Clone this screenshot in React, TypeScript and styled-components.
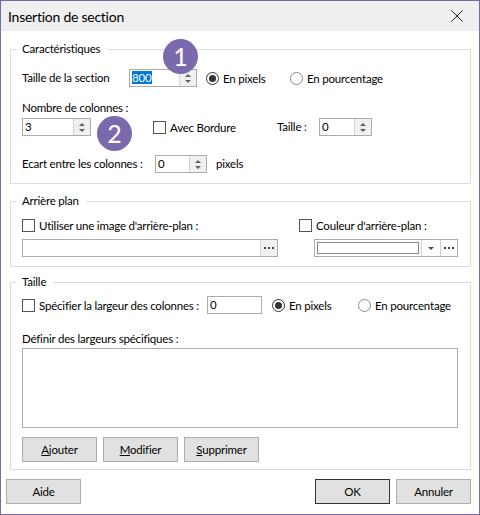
import React from "react";
import styled, { createGlobalStyle } from "styled-components";

const GlobalStyle = createGlobalStyle`
    html, body {
        margin: 0;
        padding: 0;
        background: #ffffff;
    }
`;

const Window = styled.div`
    width: 480px;
    height: 515px;
    box-sizing: border-box;
    border: 1px solid #7a68ad;
    background: #ffffff;
    position: relative;

    display: flex;
    flex-direction: column;

    color: #000000;
    font-family: "Segoe UI", Lato, sans-serif;
    font-size: 11.5px;
    letter-spacing: -0.2px;
`;

const TitleBar = styled.div`
    height: 30px;
    background: #efefef;
    padding-left: 7px;
    padding-right: 16px;

    display: flex;
    align-items: center;
    justify-content: space-between;

    span {
        font-size: 14px;
        letter-spacing: -0.25px;
    }
`;

const Body = styled.div`
    padding: 10px 8px 0 9px;

    display: flex;
    flex-direction: column;
`;

const Group = styled.fieldset<{ $top?: number; $pad?: string }>`
    margin: ${(p) => p.$top ?? 0}px 0 0 0;
    min-width: 0;
    padding: ${(p) => p.$pad ?? "12px 11px 10px 11px"};
    border: 1px solid #dcdcdc;

    legend {
        margin-left: -6px;
        padding: 0 7px 0 6px;
        line-height: 16px;
    }
`;

const Row = styled.div<{ $mt?: number }>`
    height: 18px;
    margin-top: ${(p) => p.$mt ?? 0}px;

    display: flex;
    align-items: center;
`;

const Label = styled.div<{ $w?: number; $mt?: number }>`
    width: ${(p) => (p.$w ? `${p.$w}px` : "auto")};
    flex-shrink: 0;
    line-height: 16px;
    margin-top: ${(p) => p.$mt ?? 0}px;
    white-space: nowrap;
`;

const Gap = styled.div<{ $w: number }>`
    width: ${(p) => p.$w}px;
    flex-shrink: 0;
`;

const SpinBox = styled.div<{ $w: number }>`
    width: ${(p) => p.$w}px;
    height: 18px;
    box-sizing: border-box;
    border: 1px solid #ababab;
    flex-shrink: 0;

    display: flex;
`;

const SpinValue = styled.div`
    flex: 1;
    padding-left: 2px;
    line-height: 16px;

    em {
        font-style: normal;
        background: #0078d7;
        color: #ffffff;
        padding-right: 1px;
    }
`;

const SpinButtons = styled.div`
    width: 16px;
    border-left: 1px solid #d4d4d4;
    background: #f0f0f0;

    display: flex;
    flex-direction: column;
    align-items: center;
    justify-content: center;
    gap: 3px;
`;

const Arrow = styled.div<{ $down?: boolean }>`
    width: 0;
    height: 0;
    border-left: 3px solid transparent;
    border-right: 3px solid transparent;
    ${(p) => (p.$down ? "border-top: 3px solid #606060;" : "border-bottom: 3px solid #606060;")}
`;

const Spinner = ({ value, width, selected }: { value: string; width: number; selected?: boolean }) => (
    <SpinBox $w={width}>
        <SpinValue>{selected ? <em>{value}</em> : value}</SpinValue>
        <SpinButtons>
            <Arrow />
            <Arrow $down />
        </SpinButtons>
    </SpinBox>
);

const Choice = styled.label<{ $w?: number }>`
    width: ${(p) => (p.$w ? `${p.$w}px` : "auto")};
    flex-shrink: 0;
    white-space: nowrap;

    display: flex;
    align-items: center;
    gap: 4px;
`;

const RadioMark = styled.span<{ $on?: boolean }>`
    width: 13px;
    height: 13px;
    box-sizing: border-box;
    border-radius: 50%;
    border: 1px solid ${(p) => (p.$on ? "#333333" : "#8a8a8a")};
    background: #ffffff;
    flex-shrink: 0;

    display: flex;
    align-items: center;
    justify-content: center;

    &::after {
        content: "";
        width: 7px;
        height: 7px;
        border-radius: 50%;
        background: ${(p) => (p.$on ? "#333333" : "transparent")};
    }
`;

const CheckMark = styled.span`
    width: 13px;
    height: 13px;
    box-sizing: border-box;
    border: 1px solid #555555;
    background: #ffffff;
    flex-shrink: 0;
`;

const Radio = ({ label, on, width }: { label: string; on?: boolean; width?: number }) => (
    <Choice $w={width}>
        <RadioMark $on={on} />
        {label}
    </Choice>
);

const Check = ({ label, width }: { label: string; width?: number }) => (
    <Choice $w={width}>
        <CheckMark />
        {label}
    </Choice>
);

const TextBox = styled.div<{ $w: number }>`
    width: ${(p) => p.$w}px;
    height: 18px;
    box-sizing: border-box;
    border: 1px solid #ababab;
    padding-left: 2px;
    line-height: 16px;
    flex-shrink: 0;

    display: flex;
`;

const DotCell = styled.div<{ $bg?: string }>`
    width: 16px;
    border-left: 1px solid #d4d4d4;
    background: ${(p) => p.$bg ?? "#f0f0f0"};
    margin-left: auto;

    display: flex;
    align-items: center;
    justify-content: center;
    gap: 2px;

    i {
        width: 2px;
        height: 2px;
        background: #404040;
    }
`;

const Dots = ({ bg }: { bg?: string }) => (
    <DotCell $bg={bg}>
        <i />
        <i />
        <i />
    </DotCell>
);

const BgGrid = styled.div`
    display: grid;
    grid-template-columns: 277px 1fr;
    row-gap: 6px;
`;

const Cell = styled.div`
    height: 16px;
    display: flex;
    align-items: center;
`;

const FieldCell = styled.div<{ $indent?: number }>`
    padding-left: ${(p) => p.$indent ?? 0}px;
    display: flex;
`;

const ColorCombo = styled.div`
    width: 144px;
    height: 18px;
    box-sizing: border-box;
    border: 1px solid #ababab;

    display: flex;
`;

const Swatch = styled.div`
    flex: 1;
    margin: 2px;
    border: 1px solid #8c8c8c;
    background: #ffffff;
`;

const DropArrow = styled.div`
    width: 18px;
    border-left: 1px solid #d4d4d4;
    display: flex;
    align-items: center;
    justify-content: center;

    &::after {
        content: "";
        border-left: 3px solid transparent;
        border-right: 3px solid transparent;
        border-top: 3px solid #505050;
    }
`;

const ListBox = styled.div`
    width: 436px;
    height: 80px;
    box-sizing: border-box;
    border: 1px solid #ababab;
    margin-top: 1px;
`;

const ButtonRow = styled.div<{ $mt?: number }>`
    margin-top: ${(p) => p.$mt ?? 0}px;
    display: flex;
    gap: 6px;
`;

const Button = styled.button<{ $default?: boolean }>`
    width: 75px;
    height: 25px;
    box-sizing: border-box;
    border: 1px solid ${(p) => (p.$default ? "#333333" : "#adadad")};
    background: #e1e1e1;
    padding: 0;

    color: #000000;
    font-family: inherit;
    font-size: 11.5px;
    letter-spacing: -0.2px;

    u {
        text-decoration: underline;
    }
`;

const Footer = styled.div`
    margin-top: 9px;
    padding: 0 8px 0 5px;

    display: flex;
    justify-content: space-between;
`;

const Badge = styled.div<{ $x: number; $y: number }>`
    position: absolute;
    left: ${(p) => p.$x}px;
    top: ${(p) => p.$y}px;
    width: 35px;
    height: 35px;
    border-radius: 50%;
    background: #7b69ae;

    display: flex;
    align-items: center;
    justify-content: center;

    color: #ffffff;
    font-size: 25px;
    line-height: 1;
`;

const CloseIcon = () => (
    <svg width="12" height="12" viewBox="0 0 12 12">
        <path d="M0.5 0.5 L11.5 11.5 M11.5 0.5 L0.5 11.5" stroke="#222" strokeWidth="1" />
    </svg>
);

const App = () => {
    return (
        <>
            <GlobalStyle />
            <Window>
                <TitleBar>
                    <span>Insertion de section</span>
                    <CloseIcon />
                </TitleBar>

                <Body>
                    <Group>
                        <legend>Caractéristiques</legend>
                        <Row>
                            <Label $w={107}>Taille de la section</Label>
                            <Spinner value="800" width={68} selected />
                            <Gap $w={9} />
                            <Radio label="En pixels" on width={84} />
                            <Radio label="En pourcentage" />
                        </Row>

                        <Label $mt={13}>Nombre de colonnes :</Label>
                        <Row $mt={2}>
                            <Spinner value="3" width={69} />
                            <Gap $w={62} />
                            <Check label="Avec Bordure" width={124} />
                            <Label $w={42}>Taille :</Label>
                            <Spinner value="0" width={53} />
                        </Row>

                        <Row $mt={19}>
                            <Label $w={133}>Ecart entre les colonnes :</Label>
                            <Spinner value="0" width={52} />
                            <Gap $w={9} />
                            <Label>pixels</Label>
                        </Row>
                    </Group>

                    <Group $top={9} $pad="8px 11px 9px 11px">
                        <legend>Arrière plan</legend>
                        <BgGrid>
                            <Cell>
                                <Check label="Utiliser une image d'arrière-plan :" />
                            </Cell>
                            <Cell>
                                <Check label="Couleur d'arrière-plan :" />
                            </Cell>
                            <FieldCell>
                                <TextBox $w={256}>
                                    <Dots />
                                </TextBox>
                            </FieldCell>
                            <FieldCell $indent={15}>
                                <ColorCombo>
                                    <Swatch />
                                    <DropArrow />
                                    <Dots bg="#ffffff" />
                                </ColorCombo>
                            </FieldCell>
                        </BgGrid>
                    </Group>

                    <Group $top={7} $pad="6px 11px 7px 11px">
                        <legend>Taille</legend>
                        <Row>
                            <Check label="Spécifier la largeur des colonnes :" width={185} />
                            <TextBox $w={55}>0</TextBox>
                            <Gap $w={10} />
                            <Radio label="En pixels" on width={86} />
                            <Radio label="En pourcentage" />
                        </Row>

                        <Label $mt={17}>Définir des largeurs spécifiques :</Label>
                        <ListBox />

                        <ButtonRow $mt={9}>
                            <Button><u>A</u>jouter</Button>
                            <Button><u>M</u>odifier</Button>
                            <Button><u>S</u>upprimer</Button>
                        </ButtonRow>
                    </Group>
                </Body>

                <Footer>
                    <Button>Aide</Button>
                    <ButtonRow>
                        <Button $default>OK</Button>
                        <Button>Annuler</Button>
                    </ButtonRow>
                </Footer>

                <Badge $x={162} $y={38}>1</Badge>
                <Badge $x={96} $y={115}>2</Badge>
            </Window>
        </>
    );
};

export default App;
